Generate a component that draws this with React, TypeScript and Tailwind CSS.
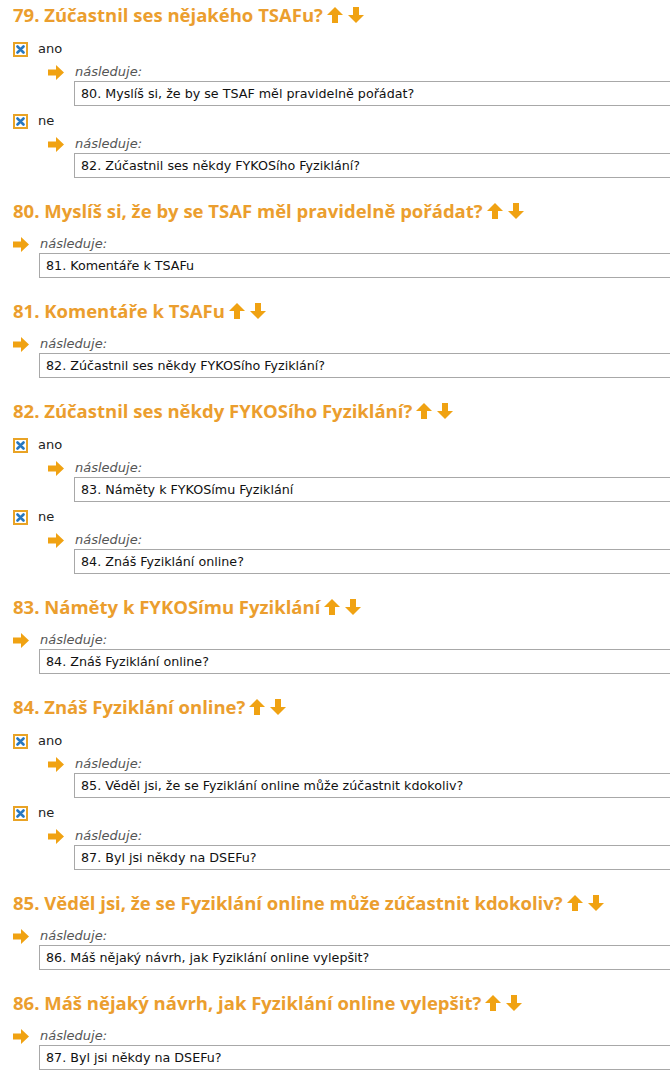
import React from "react";

type Option = { label: string; next: string };
type Question = { title: string; options?: Option[]; next?: string };

const questions: Question[] = [
  {
    title: "79. Zúčastnil ses nějakého TSAFu?",
    options: [
      { label: "ano", next: "80. Myslíš si, že by se TSAF měl pravidelně pořádat?" },
      { label: "ne", next: "82. Zúčastnil ses někdy FYKOSího Fyziklání?" },
    ],
  },
  { title: "80. Myslíš si, že by se TSAF měl pravidelně pořádat?", next: "81. Komentáře k TSAFu" },
  { title: "81. Komentáře k TSAFu", next: "82. Zúčastnil ses někdy FYKOSího Fyziklání?" },
  {
    title: "82. Zúčastnil ses někdy FYKOSího Fyziklání?",
    options: [
      { label: "ano", next: "83. Náměty k FYKOSímu Fyziklání" },
      { label: "ne", next: "84. Znáš Fyziklání online?" },
    ],
  },
  { title: "83. Náměty k FYKOSímu Fyziklání", next: "84. Znáš Fyziklání online?" },
  {
    title: "84. Znáš Fyziklání online?",
    options: [
      { label: "ano", next: "85. Věděl jsi, že se Fyziklání online může zúčastnit kdokoliv?" },
      { label: "ne", next: "87. Byl jsi někdy na DSEFu?" },
    ],
  },
  {
    title: "85. Věděl jsi, že se Fyziklání online může zúčastnit kdokoliv?",
    next: "86. Máš nějaký návrh, jak Fyziklání online vylepšit?",
  },
  { title: "86. Máš nějaký návrh, jak Fyziklání online vylepšit?", next: "87. Byl jsi někdy na DSEFu?" },
];

function UpArrow() {
  return (
    <svg width="16" height="16" viewBox="0 0 16 16" className="shrink-0">
      <path d="M8 0 L16 8 L11 8 L11 16 L5 16 L5 8 L0 8 Z" fill="#f0a212" />
    </svg>
  );
}

function DownArrow() {
  return (
    <svg width="16" height="16" viewBox="0 0 16 16" className="shrink-0">
      <path d="M5 0 L11 0 L11 8 L16 8 L8 16 L0 8 L5 8 Z" fill="#f0a212" />
    </svg>
  );
}

function RightArrow() {
  return (
    <svg width="16" height="15" viewBox="0 0 16 15" className="shrink-0">
      <path d="M0 4.5 L8 4.5 L8 0 L16 7.5 L8 15 L8 10.5 L0 10.5 Z" fill="#f0a212" />
    </svg>
  );
}

function Checked() {
  return (
    <span className="w-[15px] h-[15px] border-2 border-[#e9a325] bg-white flex items-center justify-center shrink-0">
      <svg width="9" height="9" viewBox="0 0 9 9">
        <path d="M1.5 1.5 L7.5 7.5 M7.5 1.5 L1.5 7.5" stroke="#2878c0" strokeWidth="2.6" strokeLinecap="round" />
      </svg>
    </span>
  );
}

function Follows({ text }: { text: string }) {
  return (
    <div className="flex items-start gap-[11px]">
      <div className="h-[18px] flex items-center">
        <RightArrow />
      </div>
      <div className="flex-1 -ml-px">
        <div className="h-[18px] leading-[18px] pl-px italic text-[13px] text-[#555]">následuje:</div>
        <div className="h-[25px] w-[calc(100%+6px)] border border-[#a8a8a8] bg-white pl-[6px] leading-[23px] text-[12.7px] text-[#111] whitespace-nowrap">
          {text}
        </div>
      </div>
    </div>
  );
}

export default function App() {
  return (
    <div
      className="w-[670px] h-[1088px] overflow-hidden bg-white text-[#222]"
      style={{ fontFamily: '"DejaVu Sans", Verdana, sans-serif' }}
    >
      <div className="pl-[13px] flex flex-col gap-[19px] pt-px">
        {questions.map((q) => (
          <section key={q.title}>
            <h2
              className="h-[28px] flex items-center gap-[4px] text-[18.5px] font-bold text-[#eb9e2e] whitespace-nowrap"
              style={{ fontFamily: '"Open Sans", sans-serif' }}
            >
              <span>{q.title}</span>
              <span className="flex gap-[5px]">
                <UpArrow />
                <DownArrow />
              </span>
            </h2>
            <div className="mt-[10px]">
              {q.options ? (
                <div className="flex flex-col gap-[5px]">
                  {q.options.map((o) => (
                    <div key={o.label}>
                      <div className="h-[20px] flex items-center gap-[10px] text-[13px]">
                        <Checked />
                        <span>{o.label}</span>
                      </div>
                      <div className="pl-[35px] mt-[4px]">
                        <Follows text={o.next} />
                      </div>
                    </div>
                  ))}
                </div>
              ) : (
                <Follows text={q.next!} />
              )}
            </div>
          </section>
        ))}
      </div>
    </div>
  );
}
